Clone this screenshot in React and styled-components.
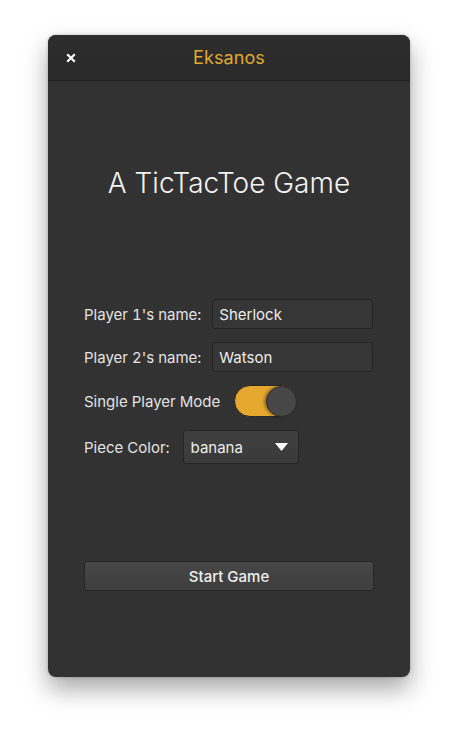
import React, { useState } from "react";
import styled, { createGlobalStyle } from "styled-components";

const Global = createGlobalStyle`
  html, body { margin: 0; padding: 0; background: #ffffff; }
  body { font-family: Inter, "Noto Sans", sans-serif; }
  * { box-sizing: border-box; }
`;

const Page = styled.div`
  width: 458px;
  height: 738px;
  padding: 35px 0 0 48px;
`;

const Window = styled.div`
  width: 362px;
  height: 642px;
  border-radius: 8px;
  background: #323232;
  box-shadow: 0 12px 24px rgba(0, 0, 0, 0.35), 0 0 3px rgba(0, 0, 0, 0.25);
  display: flex;
  flex-direction: column;
  overflow: hidden;
`;

const TitleBar = styled.div`
  height: 46px;
  flex: none;
  display: grid;
  grid-template-columns: 46px 1fr 46px;
  align-items: center;
  background: linear-gradient(#2e2e2e, #292929);
  border-bottom: 1px solid #1f1f1f;
`;

const CloseButton = styled.button`
  border: 0;
  background: none;
  padding: 0;
  margin-left: 15px;
  width: 16px;
  height: 16px;
  display: flex;
  align-items: center;
  justify-content: center;
  cursor: pointer;
`;

const Title = styled.div`
  text-align: center;
  color: #e0a92f;
  font-size: 18px;
  letter-spacing: 0.1px;
`;

const Content = styled.div`
  flex: 1;
  display: flex;
  flex-direction: column;
  padding: 85px 36px 0 36px;
`;

const Heading = styled.h1`
  margin: 0;
  text-align: center;
  color: #f2f2f2;
  font-weight: 300;
  font-size: 28px;
  line-height: 34px;
`;

const Form = styled.div`
  margin-top: 99px;
  display: flex;
  flex-direction: column;
  gap: 13px;
`;

const Row = styled.div`
  display: flex;
  align-items: center;
  gap: ${(p) => p.$gap || 14}px;
  height: ${(p) => p.$h || 30}px;
`;

const Label = styled.label`
  color: #e2e2e2;
  font-size: 15px;
  white-space: nowrap;
  font-feature-settings: "tnum" 1;
`;

const TextInput = styled.input`
  width: 161px;
  height: 30px;
  background: #363636;
  border: 1px solid #232323;
  border-radius: 3px;
  color: #ececec;
  font-family: Inter, "Noto Sans", sans-serif;
  font-size: 15px;
  padding: 0 6px;
  outline: none;
`;

const Track = styled.button`
  width: 63px;
  height: 32px;
  border-radius: 16px;
  border: 1px solid #2a2a2a;
  background: ${(p) => (p.$on ? "#e6a92f" : "#555")};
  padding: 0;
  display: flex;
  justify-content: ${(p) => (p.$on ? "flex-end" : "flex-start")};
  align-items: center;
  cursor: pointer;
`;

const Knob = styled.span`
  width: 31px;
  height: 31px;
  border-radius: 50%;
  background: #474747;
  border: 1px solid #2c2c2c;
  box-shadow: -2px 0 3px rgba(0, 0, 0, 0.35);
  margin-right: -1px;
`;

const Select = styled.div`
  width: 116px;
  height: 34px;
  border: 1px solid #252525;
  border-radius: 3px;
  background: linear-gradient(#404040, #3a3a3a);
  display: flex;
  align-items: center;
  justify-content: space-between;
  padding: 0 10px 0 7px;
  color: #ececec;
  font-size: 15px;
`;

const StartButton = styled.button`
  margin-top: 97px;
  height: 30px;
  width: 100%;
  border: 1px solid #262626;
  border-radius: 3px;
  background: linear-gradient(#474747, #3e3e3e);
  color: #f0f0f0;
  font-family: Inter, "Noto Sans", sans-serif;
  font-size: 15px;
  font-weight: 500;
  cursor: pointer;
`;

export default function App() {
  const [on, setOn] = useState(true);
  return (
    <Page>
      <Global />
      <Window>
        <TitleBar>
          <CloseButton aria-label="close">
            <svg width="10" height="10" viewBox="0 0 10 10">
              <path d="M2 2 L8 8 M8 2 L2 8" stroke="#ffffff" strokeWidth="2.2" strokeLinecap="square" />
            </svg>
          </CloseButton>
          <Title>Eksanos</Title>
          <span />
        </TitleBar>
        <Content>
          <Heading>A TicTacToe Game</Heading>
          <Form>
            <Row $gap={11}>
              <Label>Player 1's name:</Label>
              <TextInput defaultValue="Sherlock" />
            </Row>
            <Row $gap={11}>
              <Label>Player 2's name:</Label>
              <TextInput defaultValue="Watson" />
            </Row>
            <Row $h={32}>
              <Label>Single Player Mode</Label>
              <Track $on={on} onClick={() => setOn(!on)}>
                <Knob />
              </Track>
            </Row>
            <Row $h={34} $gap={13}>
              <Label>Piece Color:</Label>
              <Select>
                <span>banana</span>
                <svg width="13" height="8" viewBox="0 0 13 8">
                  <path d="M0 0 H13 L6.5 8 Z" fill="#ffffff" />
                </svg>
              </Select>
            </Row>
          </Form>
          <StartButton>Start Game</StartButton>
        </Content>
      </Window>
    </Page>
  );
}
